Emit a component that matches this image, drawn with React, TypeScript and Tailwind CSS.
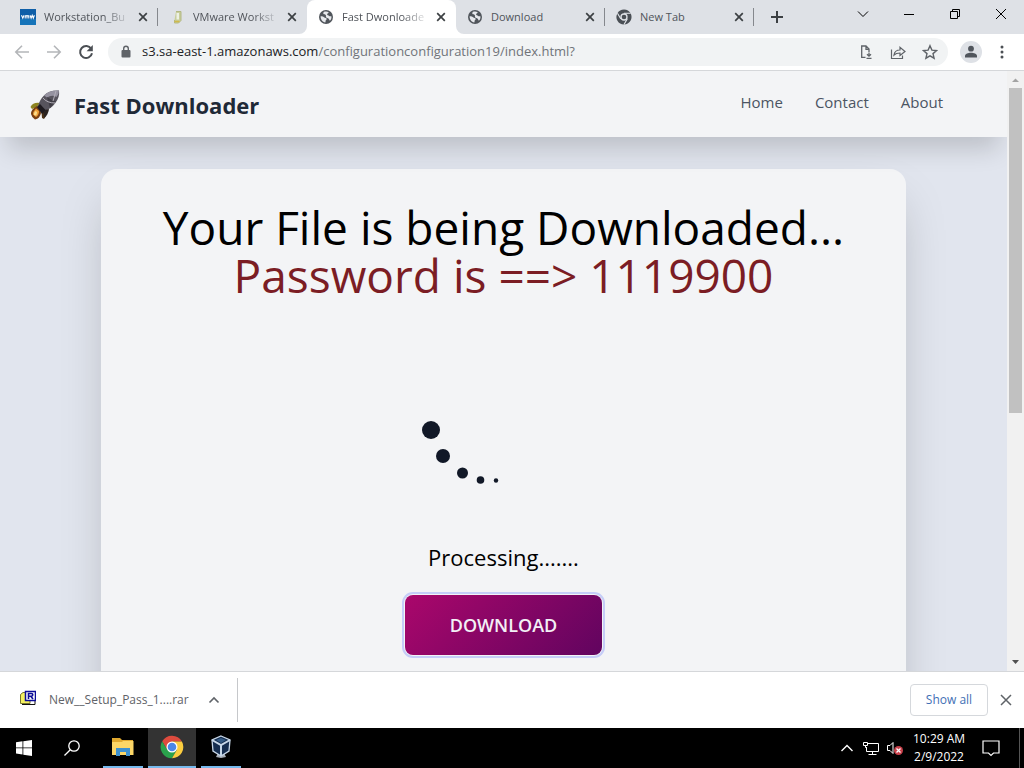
import type { ReactNode } from 'react'

const tabs = [
  { title: 'Workstation_Bu', icon: 'vmw' },
  { title: 'VMware Workst', icon: 'pack' },
  { title: 'Fast Dwonloade', icon: 'globe', active: true },
  { title: 'Download', icon: 'globe' },
  { title: 'New Tab', icon: 'chrome' },
]

function Globe() {
  return (
    <svg viewBox="0 0 16 16" className="size-4 shrink-0" aria-hidden="true">
      <circle cx="8" cy="8" r="7" fill="#50555b" />
      <path d="M2.600 7.200c1.600-.2 2.700.2 3.500 1 .8.9 2.300.5 2.600 1.500.2.9-.9 1.300-1.100 2.100-.1.700.1 1.300-.3 1.700C4.600 13 2.500 10.500 2.600 7.200zM6 2.800c1.600-.6 3.300-.5 4.700.4-.1.900-.9 1.100-1.400 1.500-.5.5-.1 1.200.6 1.500.9.400 1.500 1.100 2.400 1.100.5 0 .8-.2 1.100-.1.300 1.600-.3 3.300-1.300 4.400-.9-.1-.8-1.400-1.400-1.900-.8-.7-2.100-.4-2.600-1.400-.4-.9.2-1.700-.4-2.300-.6-.6-1.700-.2-2.200-.9-.4-.7-.1-1.700.5-2.300z" fill="#e6e8ec" />
    </svg>
  )
}

function ChromeMark({ mono = false }: { mono?: boolean }) {
  const red = mono ? '#4a4f55' : '#dd4b3e'
  const green = mono ? '#4a4f55' : '#2aa24c'
  const yellow = mono ? '#4a4f55' : '#fccd3f'
  const gap = mono ? '#dee1e6' : 'none'
  return (
    <svg viewBox="0 0 24 24" className={mono ? 'size-4 shrink-0' : 'size-6'} aria-hidden="true">
      <path d="M12 6.500h9.900A11.300 11.300 0 0 0 2.200 6.300L7.200 15z" fill={red} />
      <path d="M7.200 14.800 2.200 6.300A11.300 11.300 0 0 0 12 23.300l4.900-8.500z" fill={green} />
      <path d="M16.900 14.800 12 23.300A11.300 11.300 0 0 0 21.900 6.500H12z" fill={yellow} />
      <path d="M12 6.500h10M7.200 14.800l-5-8.500M16.900 14.800 12 23.300" stroke={gap} strokeWidth="1.600" />
      <circle cx="12" cy="12" r="5.500" fill={mono ? '#dee1e6' : '#fff'} />
      <circle cx="12" cy="12" r={mono ? 3.5 : 4.3} fill={mono ? '#4a4f55' : '#4b87e8'} />
    </svg>
  )
}

function TabIcon({ kind }: { kind: string }) {
  if (kind === 'vmw')
    return (
      <svg viewBox="0 0 16 16" className="size-4 shrink-0" aria-hidden="true">
        <rect width="16" height="16" fill="#0f5fa8" />
        <path d="M0 10h16v6H0z" fill="#1674b9" />
        <path d="M1.500 6.300l1.300 2.900 1.300-2.900M5.200 9.500V7.600q0-1 .9-1t.9 1v1.900M7 7.600q0-1 .9-1t.9 1v1.900M10 6.300l1.100 2.900 1.100-2.900 1.100 2.900 1.100-2.900" fill="none" stroke="#fff" strokeWidth="1.100" />
      </svg>
    )
  if (kind === 'pack')
    return (
      <svg viewBox="0 0 16 16" className="size-4 shrink-0" aria-hidden="true">
        <path d="M7 2.500h5v9L9.500 14H5.500v-3" fill="#c8ce9c" stroke="#b3b883" />
        <path d="M7.500 4v6.500H10V4z" fill="#edf0e4" />
        <path d="M5.500 12.500h5" stroke="#d1b94a" strokeWidth="1.500" />
      </svg>
    )
  if (kind === 'globe') return <Globe />
  return <ChromeMark mono />
}

function Cross({ thin = false }: { thin?: boolean }) {
  return (
    <svg viewBox="0 0 12 12" className="size-3" fill="none" stroke="currentColor" strokeWidth={thin ? 1 : 1.7} aria-hidden="true">
      <path d={thin ? 'M1 1l10 10M11 1L1 11' : 'M2.200 2.200l7.600 7.600M9.800 2.200L2.200 9.800'} />
    </svg>
  )
}

function IconButton({ label, className = '', children }: { label: string; className?: string; children: ReactNode }) {
  return (
    <button type="button" aria-label={label} className={`flex shrink-0 items-center justify-center ${className}`}>
      {children}
    </button>
  )
}

function TabStrip() {
  return (
    <header className="flex h-[34px] shrink-0 items-stretch bg-[#dee1e6] pl-[9px]">
      {tabs.map((tab, i) => (
        <div
          key={tab.title}
          className={`relative flex w-[149px] shrink-0 items-center gap-1 pr-[7px] pl-[11px] ${tab.active ? 'rounded-t-lg bg-white' : ''}`}
        >
          {tab.active && (
            <svg viewBox="0 0 165 8" className="pointer-events-none absolute -inset-x-2 bottom-0 h-2" aria-hidden="true">
              <path d="M0 8a8 8 0 0 0 8-8v8zM165 8a8 8 0 0 1-8-8v8z" fill="#fff" />
            </svg>
          )}
          <TabIcon kind={tab.icon} />
          <span className={`min-w-0 flex-1 pl-1 text-[11px] whitespace-nowrap text-[#50545a] ${tab.title.length > 12 ? '[mask-image:linear-gradient(to_right,black_70%,transparent)]' : ''}`}>
            {tab.title}
          </span>
          <IconButton label={`Close ${tab.title}`} className="size-4 text-[#3c4043]">
            <Cross />
          </IconButton>
          {(i === 0 || i > 2) && <span className="absolute top-2 right-0 h-[18px] w-px bg-[#85888d]" />}
        </div>
      ))}
      <IconButton label="New tab" className="w-[46px] text-[#3c4043]">
        <svg viewBox="0 0 14 14" className="size-[14px]" stroke="currentColor" strokeWidth="2" aria-hidden="true">
          <path d="M7 1v12M1 7h12" />
        </svg>
      </IconButton>
      <div className="ml-auto flex h-7 text-black">
        <IconButton label="Search tabs" className="w-[46px]">
          <svg viewBox="0 0 12 12" className="size-3" fill="none" stroke="currentColor" aria-hidden="true"><path d="M1 3.500l5 5 5-5" /></svg>
        </IconButton>
        <IconButton label="Minimize" className="w-[46px]">
          <svg viewBox="0 0 12 12" className="size-3" stroke="currentColor" aria-hidden="true"><path d="M1 6.500h10" /></svg>
        </IconButton>
        <IconButton label="Restore" className="w-[46px]">
          <svg viewBox="0 0 12 12" className="size-3" fill="none" stroke="currentColor" aria-hidden="true"><path d="M1.500 3.500h7v7h-7zM3.500 3.500v-2h7v7h-2" /></svg>
        </IconButton>
        <IconButton label="Close window" className="w-[46px]">
          <Cross thin />
        </IconButton>
      </div>
    </header>
  )
}

function Toolbar() {
  return (
    <div className="flex h-[37px] shrink-0 items-center border-b border-[#d5d7da] bg-white pl-2 text-[#5f6368]">
      <IconButton label="Back" className="h-7 w-7 text-[#b4b6b9]">
        <svg viewBox="0 0 16 16" className="size-4" fill="none" stroke="currentColor" strokeWidth="1.600" aria-hidden="true"><path d="M15 8H2M8 1.800L1.800 8 8 14.200" /></svg>
      </IconButton>
      <IconButton label="Forward" className="ml-1 h-7 w-7 text-[#b4b6b9]">
        <svg viewBox="0 0 16 16" className="size-4" fill="none" stroke="currentColor" strokeWidth="1.600" aria-hidden="true"><path d="M1 8h13M8 1.800L14.200 8 8 14.200" /></svg>
      </IconButton>
      <IconButton label="Reload" className="ml-1 h-7 w-7 text-[#4b4f54]">
        <svg viewBox="0 0 16 16" className="size-4" fill="none" stroke="currentColor" strokeWidth="2" aria-hidden="true"><path d="M13.200 4.800A6 6 0 1 0 14 9.300" /><path d="M14.800 1v6.200H8.600z" fill="currentColor" stroke="none" /></svg>
      </IconButton>
      <div className="ml-2 flex h-7 flex-1 items-center rounded-full bg-[#f1f3f4] pr-[10px] pl-3">
        <svg viewBox="0 0 12 14" className="mr-[10px] h-[14px] w-3 shrink-0" aria-hidden="true">
          <rect x="1.500" y="5" width="9" height="7.500" rx="1" fill="#5f6368" />
          <path d="M3.700 5.500V3.600a2.300 2.300 0 0 1 4.600 0v1.900" fill="none" stroke="#5f6368" strokeWidth="1.400" />
        </svg>
        <p className="min-w-0 flex-1 truncate text-[13px] text-[#707479]">
          <span className="text-[#202124]">s3.sa-east-1.amazonaws.com</span>/configurationconfiguration19/index.html?
        </p>
        <div className="flex gap-4">
          <IconButton label="Install page" className="size-4">
            <svg viewBox="0 0 16 16" className="size-4" fill="none" stroke="currentColor" strokeWidth="1.300" aria-hidden="true"><path d="M7.500 13.300H3.700V2h4.300l3 3v3M8 2v3.300h3M11 8.500v3.500M9 10.200l2 2 2-2M8.500 14.300h5" /></svg>
          </IconButton>
          <IconButton label="Share" className="size-4">
            <svg viewBox="0 0 16 16" className="size-4" fill="none" stroke="currentColor" strokeWidth="1.200" aria-hidden="true"><path d="M1.500 5.500v9h11v-3M4 11c.5-3.500 2.500-5 6-5V3.200l5 4.300-5 4V9C7.500 9 5.500 9.500 4 11z" /></svg>
          </IconButton>
          <IconButton label="Bookmark" className="size-4">
            <svg viewBox="0 0 16 16" className="size-4" fill="none" stroke="currentColor" strokeWidth="1.400" aria-hidden="true"><path d="M8 1.700l1.900 4.400 4.700.4-3.600 3.100 1.100 4.600L8 11.800l-4.100 2.400L5 9.600 1.400 6.500l4.700-.4z" /></svg>
          </IconButton>
        </div>
      </div>
      <IconButton label="Profile" className="mx-3 size-[22px] rounded-full bg-[#dee1e6]">
        <svg viewBox="0 0 14 14" className="size-[14px]" fill="#50555c" aria-hidden="true"><circle cx="7" cy="3.700" r="2.900" /><path d="M1 12.500V11c0-2.200 3.300-3.200 6-3.200s6 1 6 3.200v1.500z" /></svg>
      </IconButton>
      <IconButton label="Menu" className="mr-[14px] h-7 w-4">
        <svg viewBox="0 0 4 16" className="h-4 w-1" fill="#4b4f54" aria-hidden="true"><circle cx="2" cy="3" r="1.500" /><circle cx="2" cy="8" r="1.500" /><circle cx="2" cy="13" r="1.500" /></svg>
      </IconButton>
    </div>
  )
}

function Rocket() {
  return (
    <svg viewBox="0 0 32 32" className="size-8" aria-hidden="true">
      <path d="M12 14Q5 13 2.500 18l1.500 2L9 18z" fill="#8d8420" />
      <path d="M17 22q2 4-1 8l-2-1-.5-6z" fill="#4a3115" />
      <path d="M9 17q-6 3-6 8 1 4 4 5.500 5-1 6-6.500l-1-5z" fill="#7a3f12" />
      <path d="M8 19.500q-3 3-3 6l3 2.500q3-2 3-6z" fill="#f0a13a" />
      <path d="M7.500 22q-2 2-1.500 4l2 .5q1-1.500 1-3.500z" fill="#fbdc8c" />
      <path d="M31 1.500q-10-.5-15 5-4.500 4.500-6 10.500l5 6q8-3 12-8.500 5-6 4-13z" fill="#57545d" />
      <path d="M31 1.500q-10-.5-15 5l3 2q5-3 9.500-.5Q31 5.500 31 1.500z" fill="#9592a0" />
      <path d="M19 8l5 3 4 1-6 7z" fill="#403e46" />
      <path d="M15 9q4 5 12 5M28 2l-3 10" stroke="#b2aeb8" fill="none" />
      <path d="M12 15l6 6.500-4 3.500-5-7z" fill="#1e1b20" />
      <path d="M17 21l4-1q-.5 5-4.500 9l-1-4z" fill="#29221f" />
    </svg>
  )
}

function Page() {
  return (
    <div className="flex min-h-0 flex-1">
      <div className="min-w-0 flex-1 overflow-hidden bg-[#e1e5ee]">
        <nav className="relative flex h-[66px] items-center justify-between bg-[#f3f4f6] pt-px pr-16 pl-7 shadow-[0_20px_25px_-8px_rgba(0,0,0,0.16)]">
          <a href="#home" className="flex items-center gap-[14px] text-[22px] leading-8 font-bold text-[#1f2937]">
            <Rocket />
            <span>Fast Downloader</span>
          </a>
          <div className="flex gap-8 pb-1 text-[15px] text-[#4b5563]">
            <a href="#home">Home</a>
            <a href="#contact">Contact</a>
            <a href="#about">About</a>
          </div>
        </nav>
        <main className="mx-auto mt-8 flex h-[640px] w-4/5 flex-col items-center rounded-2xl bg-[#f3f4f6] pt-[34px] shadow-2xl">
          <h1 className="text-center text-[46px] leading-[48px] whitespace-nowrap text-black">
            Your File is being Downloaded...
            <span className="block text-[#7b1d24]">Password is ==&gt; 1119900</span>
          </h1>
          <svg viewBox="0 0 180 160" className="mt-[68px] h-[160px] w-[180px]" fill="#111827" aria-hidden="true">
            <circle cx="17" cy="63" r="9" />
            <circle cx="29" cy="89" r="7" />
            <circle cx="48.500" cy="106" r="5.500" />
            <circle cx="66.500" cy="113" r="3.800" />
            <circle cx="82" cy="113.500" r="2.200" />
          </svg>
          <p className="mt-[14px] text-[22px] leading-8 text-black">Processing.......</p>
          <button type="button" className="mt-[22px] h-[60px] w-[197px] rounded-lg bg-linear-[135deg,#aa076b,#61045f] text-lg font-semibold text-[#f3f0f6] outline-2 outline-offset-1 outline-[#c5cdf8]">
            DOWNLOAD
          </button>
        </main>
      </div>
      <div className="flex w-[17px] shrink-0 flex-col items-center bg-[#f1f1f1]" aria-hidden="true">
        <svg viewBox="0 0 17 17" className="size-[17px]"><path d="M5 11h7L8.500 7.500z" fill="#a3a3a3" /></svg>
        <div className="h-[325px] w-[13px] bg-[#c1c1c1]" />
        <svg viewBox="0 0 17 17" className="mt-auto size-[17px]"><path d="M5 6h7L8.500 10z" fill="#505050" /></svg>
      </div>
    </div>
  )
}

function DownloadBar() {
  return (
    <footer className="flex h-[57px] shrink-0 items-center border-t border-[#d5d7da] bg-white pr-3 text-[#5f6368]">
      <div className="flex h-11 w-[238px] items-center border-r border-[#c6c8cb] pl-5">
        <svg viewBox="0 0 16 16" className="mr-[13px] mb-1 size-4" aria-hidden="true">
          <path d="M.5 4.500L3 2.500h7v11H.500z" fill="#f4f060" stroke="#77752c" />
          <path d="M2 14.500h13v-4" fill="none" stroke="#111" />
          <path d="M5.500 1.500h10v9h-10z" fill="#fff" stroke="#0b0b97" strokeWidth="1.500" />
          <path d="M8.500 9V3.500h2.800q1.500 0 1.500 1.300T11.300 6.200H9M10.800 6.200L13 9" fill="none" stroke="#0b0b97" strokeWidth="1.600" />
        </svg>
        <span className="flex-1 text-xs whitespace-nowrap">New__Setup_Pass_1....rar</span>
        <IconButton label="Download options" className="mr-[15px] size-4">
          <svg viewBox="0 0 12 12" className="size-3" fill="none" stroke="currentColor" strokeWidth="1.600" aria-hidden="true"><path d="M1.500 8.500L6 4l4.500 4.500" /></svg>
        </IconButton>
      </div>
      <button type="button" className="ml-auto h-8 w-[78px] rounded border border-[#d5d8dc] text-xs font-medium text-[#3f6fb5]">Show all</button>
      <IconButton label="Close downloads" className="ml-3 size-3">
        <svg viewBox="0 0 12 12" className="size-3" fill="none" stroke="currentColor" strokeWidth="1.500" aria-hidden="true"><path d="M1 1l10 10M11 1L1 11" /></svg>
      </IconButton>
    </footer>
  )
}

function Taskbar() {
  return (
    <div className="flex h-10 shrink-0 items-stretch bg-black text-white">
      <IconButton label="Start" className="w-12">
        <svg viewBox="0 0 16 16" className="size-4" fill="#fff" aria-hidden="true"><path d="M0 2.200l6.500-.9v6.200H0zM7.300 1.200L16 0v7.500H7.300zM0 8.300h6.500v6.200L0 13.600zM7.300 8.300H16V16l-8.700-1.200z" /></svg>
      </IconButton>
      <IconButton label="Search" className="w-12">
        <svg viewBox="0 0 16 16" className="size-4" fill="none" stroke="#fff" strokeWidth="1.300" aria-hidden="true"><circle cx="10" cy="6" r="5.200" /><path d="M6.300 9.700L.500 15.500" /></svg>
      </IconButton>
      <IconButton label="File Explorer" className="mr-[5px] ml-[7px] w-10 border-b-2 border-[#76b9ed]">
        <svg viewBox="0 0 22 20" className="h-5 w-[22px]" aria-hidden="true"><path d="M0 1h8l2 2h11v4H0z" fill="#e0a92f" /><path d="M0 5h10l1-1h10.500v14H0z" fill="#fbd667" /><path d="M4 19v-8h14v8h-4v-4H8v4z" fill="#3d91cf" /></svg>
      </IconButton>
      <IconButton label="Chrome" className="w-12 border-b-2 border-[#76b9ed] bg-[#333]">
        <ChromeMark />
      </IconButton>
      <IconButton label="VirtualBox" className="ml-[5px] w-10 border-b-2 border-[#76b9ed]">
        <svg viewBox="0 0 22 24" className="h-6 w-[22px]" aria-hidden="true"><path d="M8 18h6l2 4-5 1-5-1z" fill="#aab0b9" /><path d="M11 1l9 4-1 11-8 5-8-5L2 5z" fill="#162e50" stroke="#c7d7e8" strokeWidth="1.300" /><path d="M2 5l9 5 9-5M11 10v11" fill="none" stroke="#c7d7e8" strokeWidth="2" /><path d="M6 5l5-2 5 2-5 3z" fill="#345b85" /></svg>
      </IconButton>
      <div className="ml-auto flex items-center">
        <IconButton label="Show hidden icons" className="mr-2 size-4">
          <svg viewBox="0 0 14 14" className="size-[14px]" fill="none" stroke="#fff" strokeWidth="1.400" aria-hidden="true"><path d="M1.500 10L7 4.500l5.500 5.500" /></svg>
        </IconButton>
        <IconButton label="Network" className="mr-2 size-4">
          <svg viewBox="0 0 16 16" className="size-4" fill="none" stroke="#fff" aria-hidden="true"><path d="M5 3.500h10.500v8H3.500V7M9.500 11.500v3M5.500 14.500h8M.5 2.500h4v3h-4zM2.500 5.500v2h1" /></svg>
        </IconButton>
        <IconButton label="Volume" className="mr-[10px] size-4">
          <svg viewBox="0 0 16 16" className="size-4" aria-hidden="true"><path d="M.5 5.500h2.500l3-3v11l-3-3H.5z" fill="none" stroke="#fff" /><circle cx="11.500" cy="10.500" r="4.500" fill="#c9414b" /><path d="M9.500 8.500l4 4M13.500 8.500l-4 4" stroke="#fff" strokeWidth="1.300" /></svg>
        </IconButton>
        <p className="w-[52px] text-center text-xs leading-[18px] whitespace-nowrap">
          10:29 AM
          <br />
          2/9/2022
        </p>
        <IconButton label="Notifications" className="ml-[14px] h-10 w-6">
          <svg viewBox="0 0 18 18" className="size-[18px]" fill="none" stroke="#fff" strokeWidth="1.200" aria-hidden="true"><path d="M1 2h16v12h-5.500L9 16.500 6.500 14H1z" /></svg>
        </IconButton>
        <span className="mr-1 ml-4 h-10 w-px bg-[#555]" />
      </div>
    </div>
  )
}

export default function App() {
  return (
    <div className="flex h-screen flex-col overflow-hidden bg-white font-['Open_Sans','Noto_Sans',sans-serif]">
      <TabStrip />
      <Toolbar />
      <Page />
      <DownloadBar />
      <Taskbar />
    </div>
  )
}
